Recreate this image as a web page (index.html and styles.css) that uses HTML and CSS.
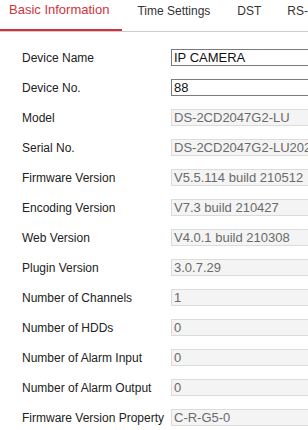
FILE: index.html
```html
<!DOCTYPE html>
<html>
<head>
<meta charset="utf-8">
<link rel="stylesheet" href="styles.css">
</head>
<body>
<div class="tabs">
  <div class="tab active">Basic Information</div>
  <div class="tab t2">Time Settings</div>
  <div class="tab t3">DST</div>
  <div class="tab t4">RS-232</div>
</div>
<div class="form">
  <div class="row"><span class="label">Device Name</span><div class="box edit">IP CAMERA</div></div>
  <div class="row"><span class="label">Device No.</span><div class="box edit">88</div></div>
  <div class="row"><span class="label">Model</span><div class="box">DS-2CD2047G2-LU</div></div>
  <div class="row"><span class="label">Serial No.</span><div class="box">DS-2CD2047G2-LU20210101AAWRF12345678</div></div>
  <div class="row"><span class="label">Firmware Version</span><div class="box">V5.5.114 build 210512</div></div>
  <div class="row"><span class="label">Encoding Version</span><div class="box">V7.3 build 210427</div></div>
  <div class="row"><span class="label">Web Version</span><div class="box">V4.0.1 build 210308</div></div>
  <div class="row"><span class="label">Plugin Version</span><div class="box">3.0.7.29</div></div>
  <div class="row"><span class="label">Number of Channels</span><div class="box">1</div></div>
  <div class="row"><span class="label">Number of HDDs</span><div class="box">0</div></div>
  <div class="row"><span class="label">Number of Alarm Input</span><div class="box">0</div></div>
  <div class="row"><span class="label">Number of Alarm Output</span><div class="box">0</div></div>
  <div class="row"><span class="label">Firmware Version Property</span><div class="box">C-R-G5-0</div></div>
</div>
</body>
</html>
```
FILE: styles.css
```css
html, body {
  margin: 0;
  padding: 0;
  overflow: hidden;
  background: #fff;
  font-family: "Liberation Sans", Arial, sans-serif;
}
.tabs {
  display: flex;
  height: 31px;
  border-bottom: 1px solid #cccccc;
  white-space: nowrap;
}
.tab {
  font-size: 12px;
  color: #333;
  line-height: 15px;
  padding-top: 4px;
  box-sizing: border-box;
}
.tab.active {
  font-size: 13px;
  color: #d0343a;
  padding: 2px 13px 0 9px;
  height: 31px;
  border-bottom: 2px solid #d0343a;
  line-height: 15px;
}
.t2 { margin-left: 15px; }
.t3 { margin-left: 27px; }
.t4 { margin-left: 26px; }
.form {
  padding: 17px 0 0 22px;
}
.row {
  display: flex;
  align-items: center;
  height: 17px;
  margin-bottom: 13px;
  white-space: nowrap;
}
.label {
  width: 149px;
  flex: none;
  font-size: 12px;
  color: #222;
}
.box {
  flex: none;
  width: 170px;
  height: 17px;
  box-sizing: border-box;
  border: 1px solid #dcdcdc;
  background: #f4f4f4;
  color: #6a6a6a;
  font-size: 13px;
  line-height: 15px;
  padding-left: 2px;
  overflow: hidden;
}
.box.edit {
  border-color: #7a7a7a;
  background: #fff;
  color: #111;
}
```
